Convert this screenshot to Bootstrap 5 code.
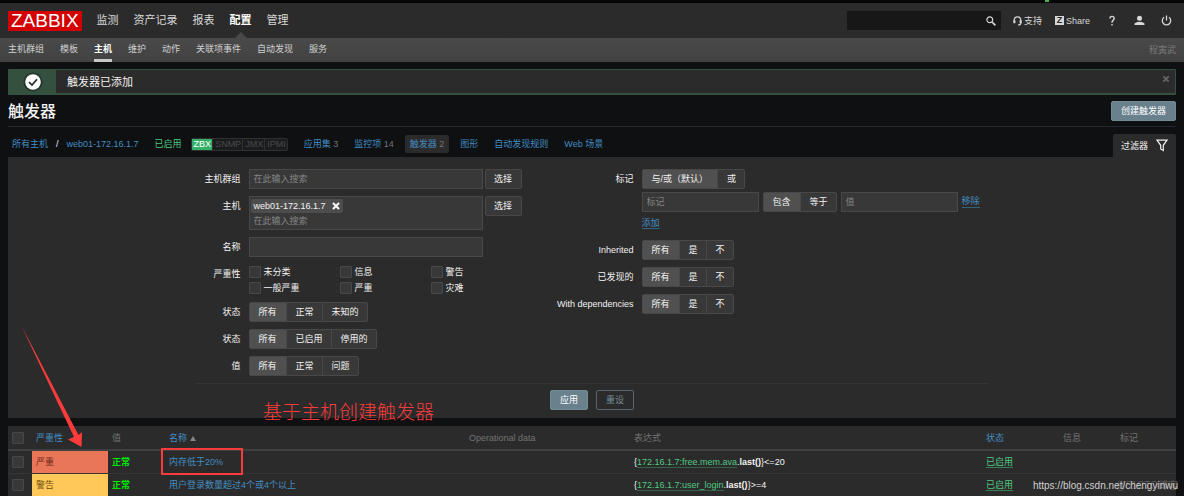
<!DOCTYPE html>
<html lang="zh-CN">
<head>
<meta charset="utf-8">
<meta name="viewport" content="width=device-width, initial-scale=1">
<title>触发器的配置</title>
<link href="https://cdn.jsdelivr.net/npm/bootstrap@5.3.0/dist/css/bootstrap.min.css" rel="stylesheet">
<style>
  :root { --panel:#2b2b2b; --field:#383838; --line:#484848; --blue:#438dc2; --green:#4fc982; --red:#fc3b3b; }
  body { background:#0e1012; color:#f2f2f2; font:9px/12px "Liberation Sans","Noto Sans CJK SC",sans-serif; }
  a { color:var(--blue); text-decoration:none; }
  input, button { font:inherit; color:inherit; }
  svg { display:block; flex:none; }
  .top-strip { height:3px; background:#050505; }
  .strip-mark { width:4px; height:2px; margin-right:135px; background:#4caf50; }
  .top-bar { height:35px; background:var(--panel); padding:0 12px 0 8px; }
  .logo { background:#d40000; color:#fff; font-size:19px; line-height:20px; padding:0 3px; }
  .logo:hover { color:#fff; }
  .main-nav { gap:15px; font-size:11px; margin-left:15px; }
  .main-nav a { color:#d8d8d8; line-height:35px; position:relative; }
  .main-nav a.active { color:#fff; font-weight:bold; }
  .main-nav a.active::after { content:""; position:absolute; bottom:0; left:50%; margin-left:-6px; border:6px solid transparent; border-top:0; border-bottom-color:#484848; }
  .search-box { width:154px; height:19px; background:#171717; padding-right:5px; margin-right:12px; }
  .search-box input { background:none; border:0; outline:0; min-width:0; }
  .search-box button, .plain { background:none; border:0; padding:0; }
  .tools { gap:16px; }
  .tools a { color:#d8d8d8; }
  .tool-pair { gap:13px; }
  .tight { gap:2px; }
  .share-z { background:#d8d8d8; color:#2b2b2b; width:9px; height:9px; line-height:9px; text-align:center; font-weight:bold; }
  .sub-bar { height:24px; background:linear-gradient(#494949,#424242); padding:0 8px; }
  .sub-nav { gap:16px; }
  .sub-nav a { color:#d0d0d0; height:24px; line-height:23px; }
  .sub-nav a.active { color:#fff; font-weight:bold; border-bottom:3px solid #c8c8c8; }
  .user-name { color:#7a7a7a; line-height:24px; }
  main { padding:7px 8px 0; position:relative; }
  .notice { height:26px; border:1px solid #34503f; border-width:1px 1px 2px; background:var(--panel); border-radius:1px; font-size:11px; }
  .notice-icon { width:47px; background:#34503f; }
  .notice-text { padding-left:11px; }
  .notice .plain { margin:5px 5px 0 auto; }
  .title-row { height:32px; border-bottom:1px solid #252729; }
  .title-row h1 { font-size:16px; line-height:20px; margin:2px 0 0; }
  .btn-main { height:20px; padding:0 9px; background:#69808d; border:1px solid #748b97; border-radius:2px; color:#fff; line-height:18px; }
  .btn-ghost { background:transparent; border-color:#55666f; color:#768d99; }
  .tab-row { height:30px; padding-left:4px; }
  .crumbs { margin-top:4px; gap:16px; }
  .crumb-state { gap:9px; }
  .crumbs .count { color:#737373; }
  .crumbs .current { background:#2b2b2b; border-radius:2px; padding:3px 5px; margin:0 -5px; }
  .on { color:var(--green); }
  .agents { border:1px solid #303030; background:#1b1c1d; color:#484a4b; border-radius:2px; line-height:11px; }
  .agents span { padding:0 1px 0 2px; border-left:1px solid #303030; }
  .agents span:first-child { background:#34af67; color:#fff; border:0; }
  .filter-tab { height:23px; padding:0 8px; gap:8px; background:var(--panel); border:0; border-radius:2px 2px 0 0; }
  .filter-panel { background:var(--panel); padding:12px 8px 8px; position:relative; }
  .filter-form { max-width:793px; margin:0 auto; }
  .col-a { width:346px; } .col-b { flex:1; }
  .form-stack { display:grid; gap:7px 8px; align-content:start; }
  .col-a.form-stack { grid-template-columns:45px 1fr; }
  .col-b.form-stack { grid-template-columns:92px 1fr; }
  .cap { text-align:right; line-height:20px; white-space:nowrap; }
  .field { height:20px; background:var(--field); border:1px solid var(--line); border-radius:0; padding:0 4px; outline:0; min-width:0; }
  .field::placeholder, .picker input::placeholder { color:#858585; opacity:1; }
  .wide { width:234px; } .mid { width:117px; }
  .picker { height:34px; background:var(--field); border:1px solid var(--line); padding:2px 1px; }
  .picker input { display:block; background:none; border:0; outline:0; padding:0 3px; height:16px; }
  .chip { background:#4d4d4d; border-radius:2px; height:14px; padding:0 3px; gap:6px; width:max-content; }
  .btn-pick { height:20px; width:37px; padding:0; background:var(--field); border:1px solid var(--line); border-radius:2px; }
  .segs { display:inline-flex; height:20px; border:1px solid var(--line); border-radius:2px; background:var(--field); vertical-align:top; }
  .segs label { padding:0 9px; line-height:18px; white-space:nowrap; cursor:pointer; }
  .segs label ~ label { padding:0 8px 0 9px; border-left:1px solid var(--line); }
  .segs .btn-check:checked + label { background:#505050; }
  .tag-rows { gap:3px; }
  .tag-add { height:18px; padding-top:2px; }
  .ticks { display:grid; grid-template-columns:91px 91px 60px; row-gap:3px; padding-top:1px; height:31px; align-content:start; }
  .ticks label { display:flex; gap:3px; align-items:center; height:13px; }
  .tick { appearance:none; width:12px; height:12px; background:var(--field); border:1px solid var(--line); border-radius:1px; margin:0; display:block; flex:none; }
  .dotted { border-bottom:1px solid #33627d; line-height:11px; }
  .form-foot { border-top:1px solid #353535; margin-top:7px; padding-top:6px; gap:8px; }
  .triggers { width:100%; margin-top:8px; table-layout:fixed; background:var(--panel); }
  .triggers th { height:24px; border-bottom:2px solid #404040; color:#737373; font-weight:normal; }
  .triggers td { height:23px; border-bottom:1px solid #353535; }
  .triggers th, .triggers td { padding:0 4px; vertical-align:middle; white-space:nowrap; }
  .c-tick { width:24px; } .c-sev { width:76px; } .c-slim { width:57px; } .c-name { width:300px; } .c-op { width:165px; } .c-state { width:77px; } .c-tags { width:60px; }
  .triggers .high { background:#e97659; color:#6e2b1b; } .triggers .warn { background:#ffc859; color:#735312; }
  .okay { color:#00e800; font-weight:bold; }
  .expr a { color:var(--green); border-bottom:1px solid #356349; }
  .state a { color:var(--green); border-bottom:1px solid #387e56; }
  .marked { position:relative; }
  .mark-box { position:absolute; left:-4px; top:-3px; width:82px; height:27px; border:2px solid var(--red); z-index:1; }
  .mark-text { position:absolute; left:255px; bottom:-7px; color:var(--red); font-size:19px; line-height:24px; font-weight:300; }
  .mark-arrow { position:absolute; left:13px; bottom:-30px; z-index:1; }
  .stamp { position:absolute; right:6px; bottom:3px; font-size:10px; line-height:16px; color:#d0d0d0; }
  .stamp-back { position:absolute; right:0; bottom:0; color:#585858; }
  .stamp-front { position:relative; }
</style>
</head>
<body>
<div class="top-strip d-flex justify-content-end"><div class="strip-mark"></div></div>
<header>
  <div class="top-bar d-flex align-items-center">
    <a class="logo" href="#">ZABBIX</a>
    <nav class="main-nav d-flex"><a href="#">监测</a><a href="#">资产记录</a><a href="#">报表</a><a class="active" href="#">配置</a><a href="#">管理</a></nav>
    <form class="search-box d-flex align-items-center ms-auto" role="search">
      <input class="flex-grow-1" type="text" aria-label="搜索">
      <button type="button" aria-label="搜索"><svg width="10" height="10" viewBox="0 0 10 10" fill="none" stroke="#d8d8d8"><circle cx="3.8" cy="3.8" r="2.9" stroke-width="1.2"/><path d="M6 6l3.4 3.4" stroke-width="1.7"/></svg></button>
    </form>
    <div class="tools d-flex align-items-center">
      <div class="tool-pair d-flex">
        <a class="d-flex align-items-center tight" href="#"><svg width="9" height="10" viewBox="0 0 9 10" fill="none" stroke="#d8d8d8"><path d="M1.2 6V4.2a3.3 3.3 0 0 1 6.6 0V7.3Q7.8 9 5 9" stroke-width="1.2"/><path d="M1.4 4.3v3M7.6 4.3v3" stroke-width="2"/></svg>支持</a>
        <a class="d-flex align-items-center tight" href="#"><span class="share-z">Z</span>Share</a>
      </div>
      <a href="#" aria-label="帮助"><svg width="12" height="12" viewBox="0 0 12 12" fill="none" stroke="#d8d8d8" stroke-width="1.4"><path d="M3.9 3.6Q3.9 1.4 6 1.4T8.1 3.4Q8.1 4.6 7 5.4 6 6.2 6 7.8M6 9.1v1.5"/></svg></a>
      <a href="#" aria-label="用户"><svg width="11" height="11" viewBox="0 0 11 11" fill="#d8d8d8"><circle cx="5.5" cy="3.2" r="2.5"/><path d="M.5 10V8.6Q2 6.8 5.5 6.8t5 1.8V10z"/></svg></a>
      <a href="#" aria-label="退出"><svg width="11" height="11" viewBox="0 0 11 11" fill="none" stroke="#d8d8d8" stroke-width="1.3"><path d="M3 2.3a4.2 4.2 0 1 0 5 0M5.5.5v5"/></svg></a>
    </div>
  </div>
  <div class="sub-bar d-flex justify-content-between">
    <nav class="sub-nav d-flex"><a href="#">主机群组</a><a href="#">模板</a><a class="active" href="#">主机</a><a href="#">维护</a><a href="#">动作</a><a href="#">关联项事件</a><a href="#">自动发现</a><a href="#">服务</a></nav>
    <span class="user-name">程寅武</span>
  </div>
</header>

<main>
  <div class="notice d-flex">
    <div class="notice-icon d-flex align-items-center justify-content-center"><svg width="20" height="20" viewBox="0 0 20 20"><circle cx="10" cy="10" r="9.5" fill="#213529"/><circle cx="10" cy="10" r="7.8" fill="#fff"/><path d="M6 10l3 3 5-5.8" fill="none" stroke="#1b2a20" stroke-width="1.7"/></svg></div>
    <div class="notice-text align-self-center">触发器已添加</div>
    <button class="plain align-self-start" type="button" aria-label="关闭"><svg width="8" height="8" viewBox="0 0 8 8" stroke="#666" stroke-width="1.8"><path d="M1.3 1.3l5.4 5.4M6.7 1.3L1.3 6.7"/></svg></button>
  </div>
  <div class="title-row d-flex align-items-center justify-content-between">
    <h1>触发器</h1>
    <button class="btn-main" type="button">创建触发器</button>
  </div>
  <div class="tab-row d-flex justify-content-between">
    <nav class="crumbs d-flex align-items-center">
      <span class="d-flex gap-2"><a href="#">所有主机</a><span>/</span><a href="#">web01-172.16.1.7</a></span>
      <span class="crumb-state d-flex align-items-center"><span class="on">已启用</span>
      <span class="agents d-flex"><span>ZBX</span><span>SNMP</span><span>JMX</span><span>IPMI</span></span></span>
      <span><a href="#">应用集</a> <span class="count">3</span></span>
      <span><a href="#">监控项</a> <span class="count">14</span></span>
      <span class="current"><a href="#">触发器</a> <span class="count">2</span></span>
      <a href="#">图形</a><a href="#">自动发现规则</a><a href="#">Web 场景</a>
    </nav>
    <button class="filter-tab d-flex align-items-center align-self-end" type="button">过滤器
      <svg width="12" height="13" viewBox="0 0 12 13" fill="none" stroke="#f2f2f2" stroke-width="1.2"><path d="M1 1.2h10L7.3 6.3v5.2L4.7 9.9V6.3z"/></svg></button>
  </div>

  <section class="filter-panel">
    <form class="filter-form">
      <div class="d-flex">
        <div class="col-a form-stack">
          <label class="cap" for="groups">主机群组</label>
          <div class="d-flex tight"><input id="groups" class="field wide" placeholder="在此输入搜索"><button class="btn-pick" type="button">选择</button></div>
          <label class="cap" for="hosts">主机</label>
          <div class="d-flex tight">
            <div class="picker wide"><span class="chip d-flex align-items-center">web01-172.16.1.7<button class="plain" type="button" aria-label="移除主机"><svg width="8" height="8" viewBox="0 0 8 8" stroke="#fff" stroke-width="2"><path d="M1 1l6 6M7 1L1 7"/></svg></button></span><input id="hosts" placeholder="在此输入搜索"></div>
            <button class="btn-pick" type="button">选择</button></div>
          <label class="cap" for="name">名称</label>
          <div class="d-flex"><input id="name" class="field wide"></div>
          <span class="cap" id="sev">严重性</span>
          <div class="ticks" role="group" aria-labelledby="sev">
            <label><input class="tick" type="checkbox">未分类</label><label><input class="tick" type="checkbox">信息</label><label><input class="tick" type="checkbox">警告</label>
            <label><input class="tick" type="checkbox">一般严重</label><label><input class="tick" type="checkbox">严重</label><label><input class="tick" type="checkbox">灾难</label>
          </div>
          <span class="cap" id="l1">状态</span>
          <div><div class="segs" role="group" aria-labelledby="l1"><input class="btn-check" type="radio" name="state" id="s1" checked><label for="s1">所有</label><input class="btn-check" type="radio" name="state" id="s2"><label for="s2">正常</label><input class="btn-check" type="radio" name="state" id="s3"><label for="s3">未知的</label></div></div>
          <span class="cap" id="l2">状态</span>
          <div><div class="segs" role="group" aria-labelledby="l2"><input class="btn-check" type="radio" name="status" id="t1" checked><label for="t1">所有</label><input class="btn-check" type="radio" name="status" id="t2"><label for="t2">已启用</label><input class="btn-check" type="radio" name="status" id="t3"><label for="t3">停用的</label></div></div>
          <span class="cap" id="l3">值</span>
          <div><div class="segs" role="group" aria-labelledby="l3"><input class="btn-check" type="radio" name="value" id="v1" checked><label for="v1">所有</label><input class="btn-check" type="radio" name="value" id="v2"><label for="v2">正常</label><input class="btn-check" type="radio" name="value" id="v3"><label for="v3">问题</label></div></div>
        </div>
        <div class="col-b form-stack">
          <span class="cap" id="l4">标记</span>
          <div class="tag-rows d-flex flex-column align-items-start">
            <div class="segs" role="group" aria-labelledby="l4"><input class="btn-check" type="radio" name="eval" id="e1" checked><label for="e1">与/或（默认）</label><input class="btn-check" type="radio" name="eval" id="e2"><label for="e2">或</label></div>
            <div class="d-flex align-items-center gap-1">
              <input class="field mid" placeholder="标记" aria-label="标记">
              <div class="segs"><input class="btn-check" type="radio" name="op" id="o1" checked><label for="o1">包含</label><input class="btn-check" type="radio" name="op" id="o2"><label for="o2">等于</label></div>
              <input class="field mid" placeholder="值" aria-label="值">
              <a class="dotted" href="#">移除</a>
            </div>
            <div class="tag-add"><a class="dotted" href="#">添加</a></div>
          </div>
          <span class="cap" id="l5">Inherited</span>
          <div><div class="segs" role="group" aria-labelledby="l5"><input class="btn-check" type="radio" name="inh" id="i1" checked><label for="i1">所有</label><input class="btn-check" type="radio" name="inh" id="i2"><label for="i2">是</label><input class="btn-check" type="radio" name="inh" id="i3"><label for="i3">不</label></div></div>
          <span class="cap" id="l6">已发现的</span>
          <div><div class="segs" role="group" aria-labelledby="l6"><input class="btn-check" type="radio" name="disc" id="d1" checked><label for="d1">所有</label><input class="btn-check" type="radio" name="disc" id="d2"><label for="d2">是</label><input class="btn-check" type="radio" name="disc" id="d3"><label for="d3">不</label></div></div>
          <span class="cap" id="l7">With dependencies</span>
          <div><div class="segs" role="group" aria-labelledby="l7"><input class="btn-check" type="radio" name="dep" id="p1" checked><label for="p1">所有</label><input class="btn-check" type="radio" name="dep" id="p2"><label for="p2">是</label><input class="btn-check" type="radio" name="dep" id="p3"><label for="p3">不</label></div></div>
        </div>
      </div>
      <div class="form-foot d-flex justify-content-center"><button class="btn-main" type="button">应用</button><button class="btn-main btn-ghost" type="reset">重设</button></div>
    </form>
    <div class="mark-text">基于主机创建触发器</div>
    <svg class="mark-arrow" width="62" height="123" viewBox="0 0 62 123" fill="#fc3b3b"><path d="M0 0L53 112 47 114.500 60.500 122 61 107 57.500 110z"/></svg>
  </section>

  <table class="triggers">
    <colgroup><col class="c-tick"><col class="c-sev"><col class="c-slim"><col class="c-name"><col class="c-op"><col><col class="c-state"><col class="c-slim"><col class="c-tags"></colgroup>
    <thead><tr><th><input class="tick" type="checkbox" aria-label="全选"></th><th><a href="#">严重性</a></th><th>值</th><th><a href="#">名称</a> <svg class="d-inline-block" width="6" height="5" viewBox="0 0 6 5" fill="#858585"><path d="M3 0l3 5H0z"/></svg></th><th>Operational data</th><th>表达式</th><th><a href="#">状态</a></th><th>信息</th><th>标记</th></tr></thead>
    <tbody>
      <tr><td><input class="tick" type="checkbox" aria-label="选择 内存低于20%"></td><td class="high">严重</td><td class="okay">正常</td><td class="marked"><a href="#">内存低于20%</a><div class="mark-box"></div></td><td></td><td class="expr">{<a href="#">172.16.1.7:free.mem.ava</a>.<b>last()</b>}&lt;=20</td><td class="state"><a href="#">已启用</a></td><td></td><td></td></tr>
      <tr><td><input class="tick" type="checkbox" aria-label="选择 用户登录数量"></td><td class="warn">警告</td><td class="okay">正常</td><td><a href="#">用户登录数量超过4个或4个以上</a></td><td></td><td class="expr">{<a href="#">172.16.1.7:user_login</a>.<b>last()</b>}&gt;=4</td><td class="state"><a href="#">已启用</a></td><td></td><td></td></tr>
    </tbody>
  </table>
  <div class="stamp"><span class="stamp-back">@51CTO博客</span><span class="stamp-front">https://blog.csdn.net/chengyinwu</span></div>
</main>
<script src="https://cdn.jsdelivr.net/npm/bootstrap@5.3.0/dist/js/bootstrap.bundle.min.js"></script>
</body>
</html>
